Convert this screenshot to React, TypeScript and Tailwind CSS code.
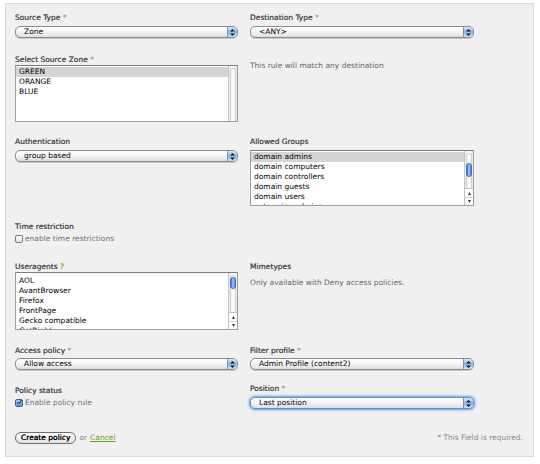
import React from 'react';
import clsx from 'clsx';

// Aqua-style stepper arrows drawn inside a popup select
function StepperArrows() {
    return (
        <svg width="5" height="7" viewBox="0 0 5 7">
            <path d="M2.5 0 L5 2.6 L0 2.6 Z" fill="#1a1a1a" />
            <path d="M2.5 7 L5 4.4 L0 4.4 Z" fill="#1a1a1a" />
        </svg>
    );
}

function PopupSelect({ value, focused }: { value: string; focused?: boolean }) {
    return (
        <div
            className={clsx(
                'relative flex h-[12px] items-center rounded-[5px] border bg-gradient-to-b from-white via-[#f4f4f4] to-[#dedede] pl-[8px] text-black',
                focused
                    ? 'border-[#5f8fd3] shadow-[0_0_0_1px_#8db4e7,0_0_2px_2px_#b4cff0]'
                    : 'border-[#8a8a8a] shadow-[0_1px_0_#c9c9c9]'
            )}
        >
            <span className="leading-[10px]">{value}</span>
            <span className="absolute right-0 top-0 bottom-0 flex w-[10px] items-center justify-center rounded-r-[4px] border-l border-[#6f93c4] bg-gradient-to-b from-[#d8e7f8] via-[#86b6ec] to-[#cfe2f7]">
                <StepperArrows />
            </span>
        </div>
    );
}

function ScrollTrack({ thumbTop, thumbHeight, arrows }: { thumbTop?: number; thumbHeight?: number; arrows?: boolean }) {
    return (
        <div className="relative flex w-[9px] flex-col border-l border-[#c4c4c4] bg-gradient-to-r from-[#e9e9e9] via-white to-[#e9e9e9]">
            <div className="mx-[1px] mt-[2px] flex-1 rounded-t-[4px] border-x border-t border-[#d0d0d0]" />
            {thumbTop !== undefined && (
                <div
                    className="absolute left-[1px] w-[6px] rounded-[3px] border border-[#3c6db3] bg-gradient-to-r from-[#2d6ad6] via-[#a9ccf6] to-[#3f7de0]"
                    style={{ top: thumbTop, height: thumbHeight }}
                />
            )}
            {arrows && (
                <div className="flex flex-col border-t border-[#c4c4c4] bg-white">
                    <div className="flex h-[8px] items-center justify-center">
                        <svg width="3" height="3" viewBox="0 0 3 3"><path d="M1.5 0 L3 3 L0 3 Z" fill="#333" /></svg>
                    </div>
                    <div className="flex h-[8px] items-center justify-center border-t border-[#d6d6d6]">
                        <svg width="3" height="3" viewBox="0 0 3 3"><path d="M1.5 3 L3 0 L0 0 Z" fill="#333" /></svg>
                    </div>
                </div>
            )}
        </div>
    );
}

function ListBox({
    items,
    selected,
    height,
    padTop = 1,
    thumbTop,
    thumbHeight,
    arrows,
}: {
    items: string[];
    selected?: number;
    height: number;
    padTop?: number;
    thumbTop?: number;
    thumbHeight?: number;
    arrows?: boolean;
}) {
    return (
        <div className="flex overflow-hidden border border-[#9d9d9d] border-t-[#7d7d7d] bg-white" style={{ height }}>
            <div className="flex-1 overflow-hidden" style={{ paddingTop: padTop }}>
                {items.map((item, i) => (
                    <div key={item} className={clsx('h-[10px] pl-[3px] leading-[10px] text-black', i === selected && 'bg-[#d4d4d4]')}>
                        {item}
                    </div>
                ))}
            </div>
            <ScrollTrack thumbTop={thumbTop} thumbHeight={thumbHeight} arrows={arrows} />
        </div>
    );
}

function Label({ children }: { children: React.ReactNode }) {
    return <div className="h-[11px] leading-[11px] text-[#4f4f4f] [text-shadow:0_0_0.4px_#4f4f4f]">{children}</div>;
}

function Req() {
    return <span className="text-[#8a8a8a] [text-shadow:none]"> *</span>;
}

function CheckBox({ checked, label }: { checked?: boolean; label: string }) {
    return (
        <label className="flex h-[11px] items-center gap-[2px] text-[#707070]">
            <span
                className={clsx(
                    'flex h-[8px] w-[8px] items-center justify-center rounded-[2px] border',
                    checked ? 'border-[#3a63a3] bg-gradient-to-b from-[#a9cdf4] to-[#4f8de0]' : 'border-[#7c7c7c] bg-gradient-to-b from-white to-[#e4e4e4]'
                )}
            >
                {checked && (
                    <svg width="8" height="8" viewBox="0 0 8 8" className="-mt-[2px] ml-[1px]">
                        <path d="M1 4.2 L3.2 6.6 L7.6 0.4" fill="none" stroke="#111" strokeWidth="1.6" />
                    </svg>
                )}
            </span>
            {label}
        </label>
    );
}

const zones = ['GREEN', 'ORANGE', 'BLUE'];
const groups = ['domain admins', 'domain computers', 'domain controllers', 'domain guests', 'domain users', 'enterprise admins'];
const agents = ['AOL', 'AvantBrowser', 'Firefox', 'FrontPage', 'Gecko compatible', 'GetRight'];

export default function App() {
    return (
        <div className="h-[464px] w-[540px] bg-white pl-[5px] pt-[3px] font-['DejaVu_Sans',sans-serif] text-[7.5px]">
            <div className="flex h-[454px] w-[529px] flex-col border border-[#dadada] bg-[#f0f0f0] px-[9px]">
                {/* source / destination */}
                <div className="mt-[8px] grid grid-cols-[223px_224px] gap-x-[12px]">
                    <div>
                        <Label>Source Type<Req /></Label>
                        <div className="mt-[3px]"><PopupSelect value="Zone" /></div>
                    </div>
                    <div>
                        <Label>Destination Type<Req /></Label>
                        <div className="mt-[3px]"><PopupSelect value="<ANY>" /></div>
                    </div>
                </div>

                <div className="mt-[16px] grid grid-cols-[223px_224px] gap-x-[12px]">
                    <div>
                        <Label>Select Source Zone<Req /></Label>
                        <ListBox items={zones} selected={0} height={57} />
                    </div>
                    <div className="pt-[6px] leading-[11px] text-[#666]">This rule will match any destination</div>
                </div>

                {/* authentication */}
                <div className="mt-[14px] grid grid-cols-[223px_224px] gap-x-[12px]">
                    <div>
                        <Label>Authentication</Label>
                        <div className="mt-[3px]"><PopupSelect value="group based" /></div>
                    </div>
                    <div>
                        <Label>Allowed Groups</Label>
                        <div className="mt-[3px]">
                            <ListBox items={groups} selected={0} height={56} thumbTop={12} thumbHeight={14} arrows />
                        </div>
                    </div>
                </div>

                <div className="mt-[15px]">
                    <Label>Time restriction</Label>
                    <div className="mt-[1px]"><CheckBox label="enable time restrictions" /></div>
                </div>

                {/* useragents / mimetypes */}
                <div className="mt-[17px] grid grid-cols-[223px_224px] gap-x-[12px]">
                    <div>
                        <Label>
                            Useragents <span className="text-[#79aa2c] [text-shadow:0_0_0.4px_#79aa2c]">?</span>
                        </Label>
                        <ListBox items={agents} height={58} padTop={3} thumbTop={4} thumbHeight={12} arrows />
                    </div>
                    <div>
                        <Label>Mimetypes</Label>
                        <div className="mt-[5px] leading-[11px] text-[#666]">Only available with Deny access policies.</div>
                    </div>
                </div>

                {/* policy */}
                <div className="mt-[15px] grid grid-cols-[223px_224px] gap-x-[12px]">
                    <div>
                        <Label>Access policy<Req /></Label>
                        <div className="mt-[2px]"><PopupSelect value="Allow access" /></div>
                    </div>
                    <div>
                        <Label>Filter profile<Req /></Label>
                        <div className="mt-[2px]"><PopupSelect value="Admin Profile (content2)" /></div>
                    </div>
                </div>

                <div className="mt-[15px] grid grid-cols-[223px_224px] gap-x-[12px]">
                    <div>
                        <Label>Policy status</Label>
                        <div className="mt-[1px]"><CheckBox checked label="Enable policy rule" /></div>
                    </div>
                    <div className="-mt-[2px]">
                        <Label>Position<Req /></Label>
                        <div className="mt-[3px]"><PopupSelect value="Last position" focused /></div>
                    </div>
                </div>

                {/* actions */}
                <div className="mt-[23px] flex items-center">
                    <button className="h-[12px] rounded-full border border-[#6d6d6d] bg-gradient-to-b from-white to-[#e2e2e2] px-[5px] leading-[10px] text-black [text-shadow:0_0_0.5px_#000]">
                        Create policy
                    </button>
                    <span className="ml-[3px] text-[#888]">or</span>
                    <a className="ml-[3px] text-[#6f9f1f] underline">Cancel</a>
                    <span className="ml-auto mr-[1px] text-[#888]">* This Field is required.</span>
                </div>
            </div>
        </div>
    );
}
